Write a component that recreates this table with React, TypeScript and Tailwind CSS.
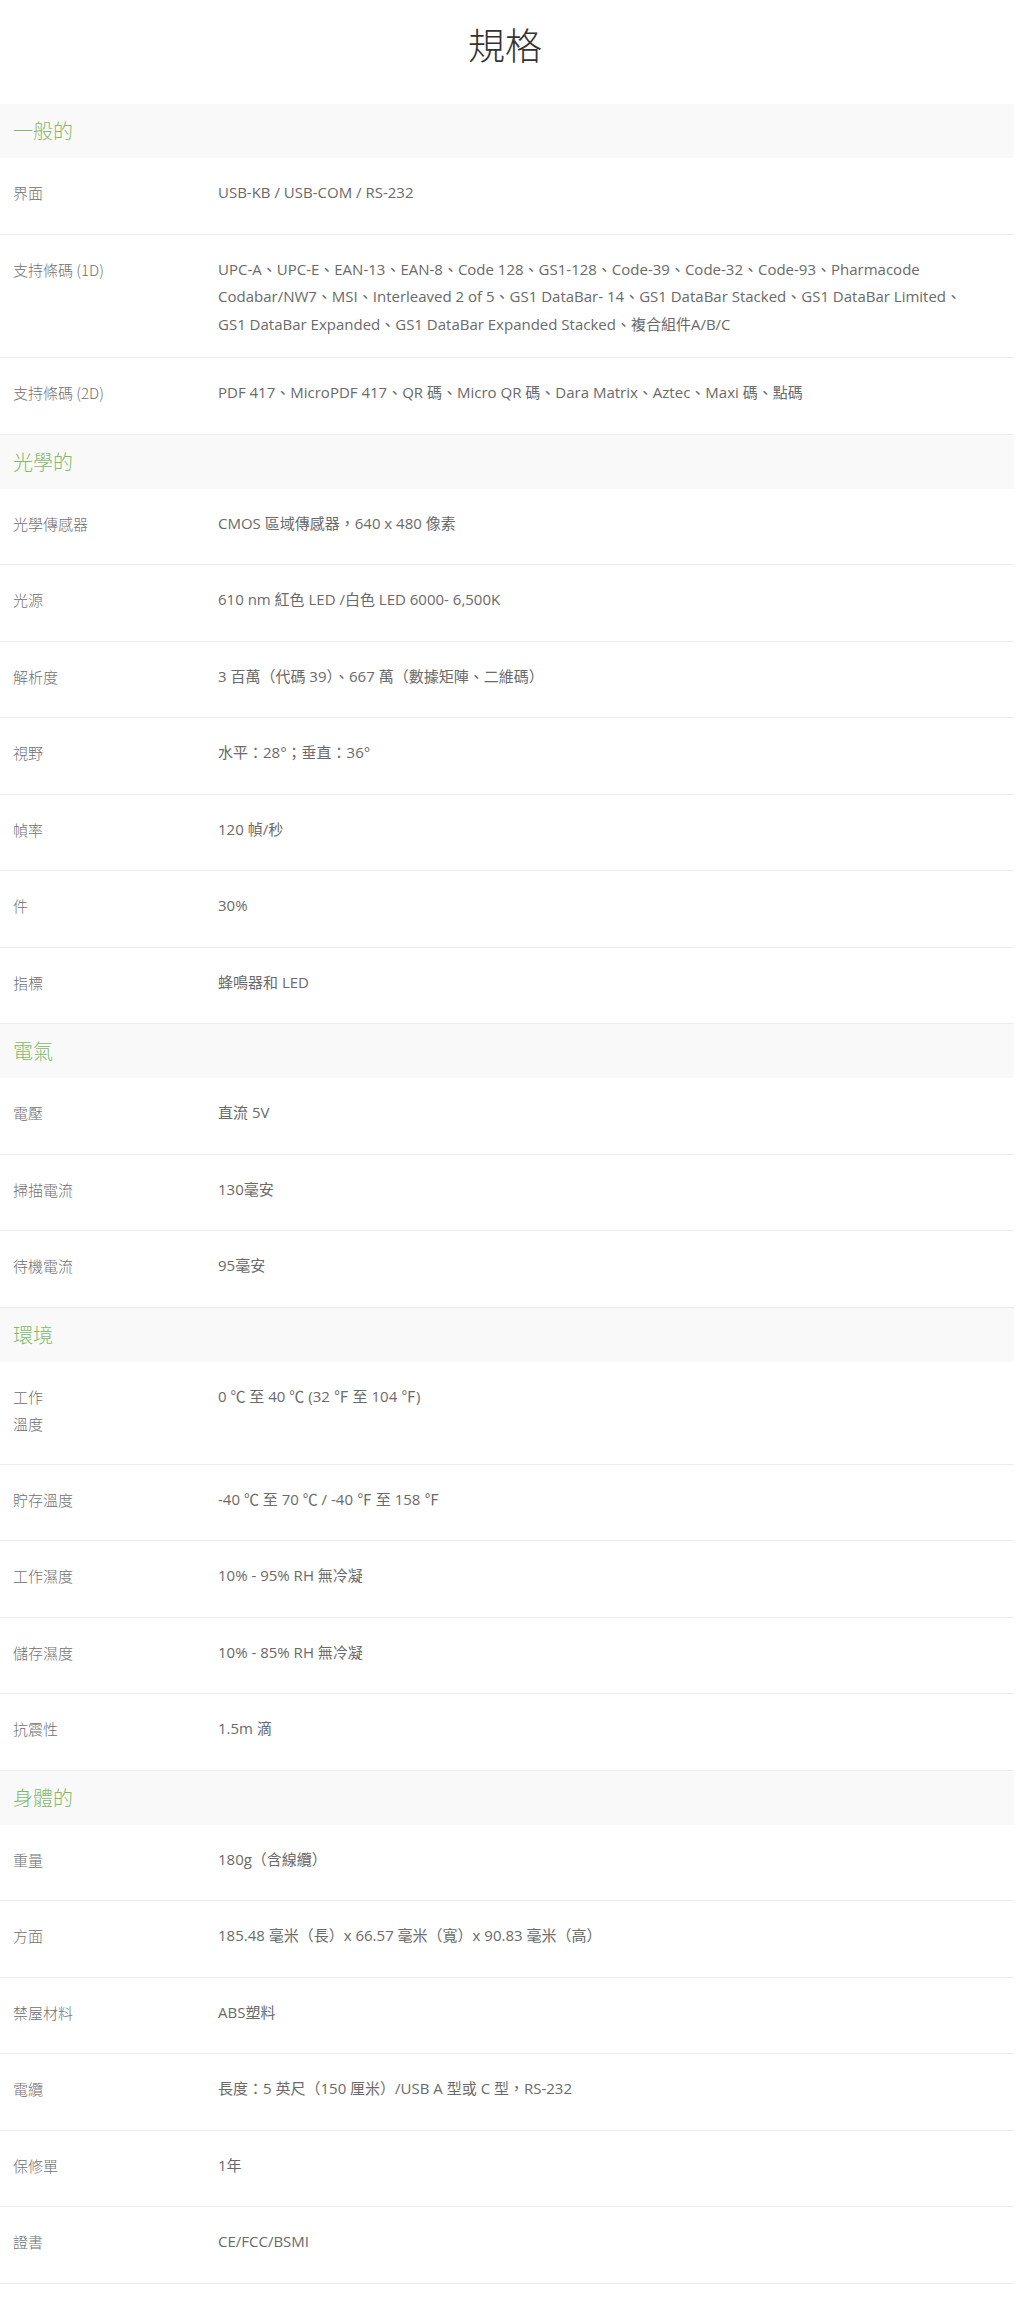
import React from "react";

type Row = { label: React.ReactNode; value: React.ReactNode; extra?: string };
type Section = { title: string; rows: Row[] };

const sections: Section[] = [
  {
    title: "一般的",
    rows: [
      { label: "界面", value: "USB-KB / USB-COM / RS-232" },
      {
        label: "支持條碼 (1D)",
        value: (
          <>
            UPC-A、UPC-E、EAN-13、EAN-8、Code 128、GS1-128、Code-39、Code-32、Code-93、Pharmacode
            <br />
            Codabar/NW7、MSI、Interleaved 2 of 5、GS1 DataBar- 14、GS1 DataBar Stacked、GS1 DataBar Limited、
            <br />
            GS1 DataBar Expanded、GS1 DataBar Expanded Stacked、複合組件A/B/C
          </>
        ),
        extra: "pb-[19px]",
      },
      { label: "支持條碼 (2D)", value: "PDF 417、MicroPDF 417、QR 碼、Micro QR 碼、Dara Matrix、Aztec、Maxi 碼、點碼" },
    ],
  },
  {
    title: "光學的",
    rows: [
      { label: "光學傳感器", value: "CMOS 區域傳感器，640 x 480 像素" },
      { label: "光源", value: "610 nm 紅色 LED /白色 LED 6000- 6,500K" },
      { label: "解析度", value: "3 百萬（代碼 39）、667 萬（數據矩陣、二維碼）" },
      { label: "視野", value: "水平：28°；垂直：36°" },
      { label: "幀率", value: "120 幀/秒" },
      { label: "件", value: "30%" },
      { label: "指標", value: "蜂鳴器和 LED" },
    ],
  },
  {
    title: "電氣",
    rows: [
      { label: "電壓", value: "直流 5V" },
      { label: "掃描電流", value: "130毫安" },
      { label: "待機電流", value: "95毫安" },
    ],
  },
  {
    title: "環境",
    rows: [
      {
        label: (
          <>
            工作
            <br />
            溫度
          </>
        ),
        value: "0 ℃ 至 40 ℃ (32 ℉ 至 104 ℉)",
        extra: "pb-[26px]",
      },
      { label: "貯存溫度", value: "-40 ℃ 至 70 ℃ / -40 ℉ 至 158 ℉" },
      { label: "工作濕度", value: "10% - 95% RH 無冷凝" },
      { label: "儲存濕度", value: "10% - 85% RH 無冷凝" },
      { label: "抗震性", value: "1.5m 滴" },
    ],
  },
  {
    title: "身體的",
    rows: [
      { label: "重量", value: "180g（含線纜）" },
      { label: "方面", value: "185.48 毫米（長）x 66.57 毫米（寬）x 90.83 毫米（高）" },
      { label: "禁屋材料", value: "ABS塑料" },
      { label: "電纜", value: "長度：5 英尺（150 厘米）/USB A 型或 C 型，RS-232" },
      { label: "保修單", value: "1年" },
      { label: "證書", value: "CE/FCC/BSMI" },
    ],
  },
];

export default function App() {
  return (
    <div className="w-[1014px] bg-white font-['Open_Sans','Noto_Sans_CJK_TC',sans-serif] pb-[21px]">
      <div className="h-[104px] pt-[18px] pr-[4px] text-center text-[37px] leading-[52px] text-[#333] font-['Noto_Sans_CJK_TC',sans-serif] font-light">
        規格
      </div>
      {sections.map((s) => (
        <div key={s.title}>
          <div className="h-[54px] flex items-center pl-[13px] bg-[#f9f9f9] text-[20px] text-[#84b96c] font-['Noto_Sans_CJK_TC',sans-serif] font-light">
            {s.title}
          </div>
          {s.rows.map((r, i) => (
            <div
              key={i}
              className={`flex border-b border-[#ececec] pl-[13px] pt-[21px] leading-[27.5px] text-[#6a6a6a] ${r.extra ?? "pb-[27px]"}`}
            >
              <div className="w-[205px] shrink-0 text-[15px] text-[#707070] font-['Noto_Sans_CJK_TC',sans-serif] font-light">{r.label}</div>
              <div className="flex-1 text-[15px] whitespace-nowrap">{r.value}</div>
            </div>
          ))}
        </div>
      ))}
    </div>
  );
}
